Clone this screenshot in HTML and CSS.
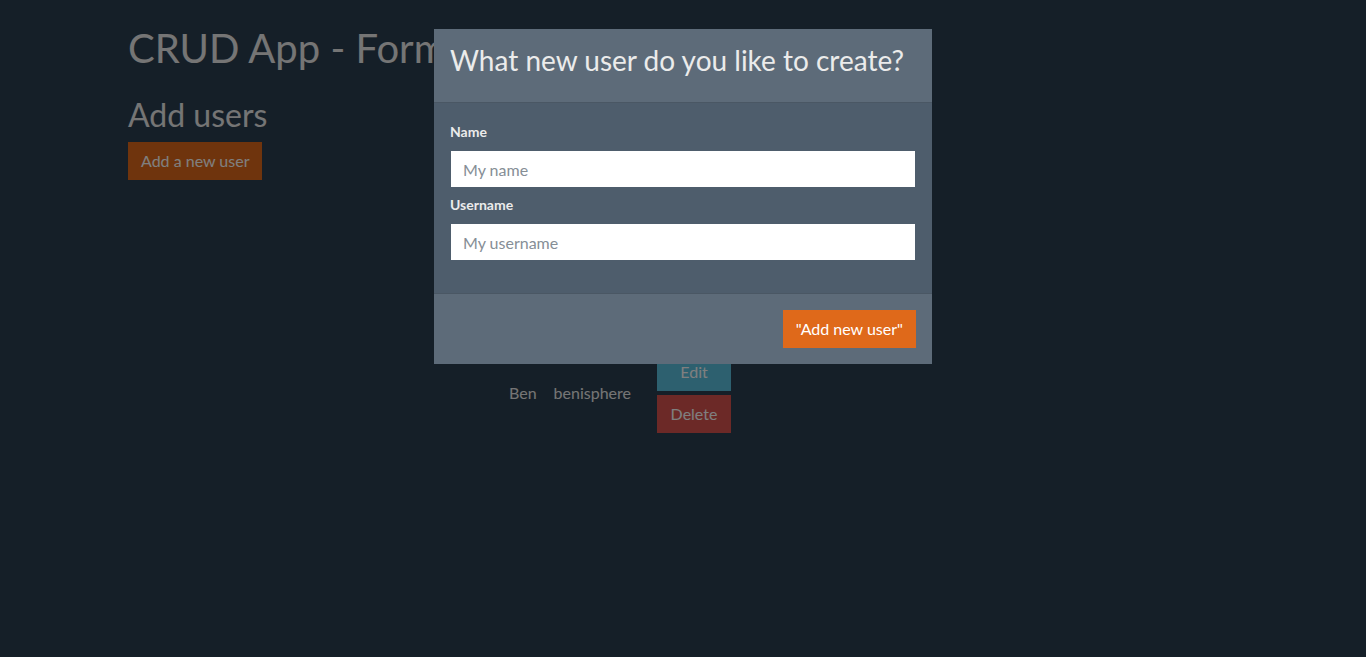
FILE: index.html
```html
<!DOCTYPE html>
<html lang="en">
<head>
<meta charset="utf-8">
<title>CRUD App</title>
<link rel="stylesheet" href="styles.css">
</head>
<body>
<div class="container">
  <h1 class="title">CRUD App - Form</h1>
  <h2 class="subtitle">Add users</h2>
  <button class="btn btn-primary">Add a new user</button>
  <div class="table-wrap">
    <table class="users">
      <tbody>
        <tr>
          <td>Ben</td>
          <td class="uname">benisphere</td>
          <td>
            <div class="actions">
              <button class="btn btn-info">Edit</button>
              <button class="btn btn-danger">Delete</button>
            </div>
          </td>
        </tr>
      </tbody>
    </table>
  </div>
</div>

<div class="backdrop"></div>

<div class="modal">
  <div class="modal-dialog">
    <div class="modal-header">
      <h3 class="modal-title">What new user do you like to create?</h3>
    </div>
    <div class="modal-body">
      <div class="form-group">
        <label class="label" for="name">Name</label>
        <input class="form-control" id="name" type="text" placeholder="My name">
      </div>
      <div class="form-group">
        <label class="label" for="username">Username</label>
        <input class="form-control" id="username" type="text" placeholder="My username">
      </div>
    </div>
    <div class="modal-footer">
      <button class="btn btn-primary">"Add new user"</button>
    </div>
  </div>
</div>
</body>
</html>
```
FILE: styles.css
```css
* { box-sizing: border-box; }
html, body { margin: 0; padding: 0; }
body {
  background: #2b3e50;
  color: #ebebeb;
  font-family: Lato, "Open Sans", "Liberation Sans", sans-serif;
  font-size: 16px;
  line-height: 1.5;
  height: 657px;
  overflow: hidden;
}
.container {
  width: 1140px;
  margin: 0 auto;
  padding: 0 15px;
}
.title {
  font-size: 40px;
  font-weight: 400;
  line-height: 1.2;
  margin: 24px 0 24px;
  white-space: nowrap;
}
.subtitle {
  font-size: 32px;
  font-weight: 400;
  line-height: 1.2;
  margin: 0 0 8px;
}
.btn {
  font-family: inherit;
  font-size: 16px;
  line-height: 1.5;
  border: 1px solid transparent;
  border-radius: 0;
  padding: 6px 12px;
  color: #fff;
  cursor: pointer;
  display: inline-block;
  vertical-align: top;
}
.btn-primary { background: #df691a; border-color: #df691a; }
.btn-info { background: #5bc0de; border-color: #5bc0de; }
.btn-danger { background: #d9534f; border-color: #d9534f; }

.table-wrap {
  margin-top: 173px;
  padding-left: 373px;
}
.users { border-collapse: collapse; }
.users td {
  padding: 0 8px;
  text-align: left;
  vertical-align: middle;
}
.users td.uname { padding-left: 9px; }
.actions {
  display: flex;
  flex-direction: column;
  gap: 4px;
  margin-left: 10px;
}
.actions .btn { width: 74px; }

.backdrop {
  position: fixed;
  inset: 0;
  background: rgba(0, 0, 0, 0.5);
}
.modal {
  position: fixed;
  inset: 0;
  display: flex;
  justify-content: center;
  align-items: flex-start;
  padding-top: 29px;
}
.modal-dialog {
  width: 498px;
  background: #4e5d6c;
}
.modal-header {
  background: #5d6b79;
  padding: 15px 16px 0;
  height: 74px;
  border-bottom: 1px solid #4a5764;
}
.modal-title {
  margin: 0;
  font-size: 28px;
  font-weight: 400;
  line-height: 1.2;
  color: #ebebeb;
  white-space: nowrap;
}
.modal-body {
  padding: 18px 16px 16px;
}
.form-group + .form-group { margin-top: 6px; }
.form-group:last-child { margin-bottom: 16px; }
.label {
  display: block;
  font-size: 14px;
  font-weight: 700;
  line-height: 1.5;
  margin: 0 0 8px;
}
.form-control {
  display: block;
  width: 100%;
  height: 38px;
  padding: 6px 12px;
  font-family: inherit;
  font-size: 16px;
  line-height: 1.5;
  border: 1px solid transparent;
  border-radius: 0;
  background: #fff;
  color: #4e5d6c;
  background-clip: padding-box;
}
.form-control::placeholder { color: #868e96; opacity: 1; }
.modal-footer {
  background: #5d6b79;
  border-top: 1px solid #4a5764;
  padding: 16px;
  display: flex;
  justify-content: flex-end;
}
```
